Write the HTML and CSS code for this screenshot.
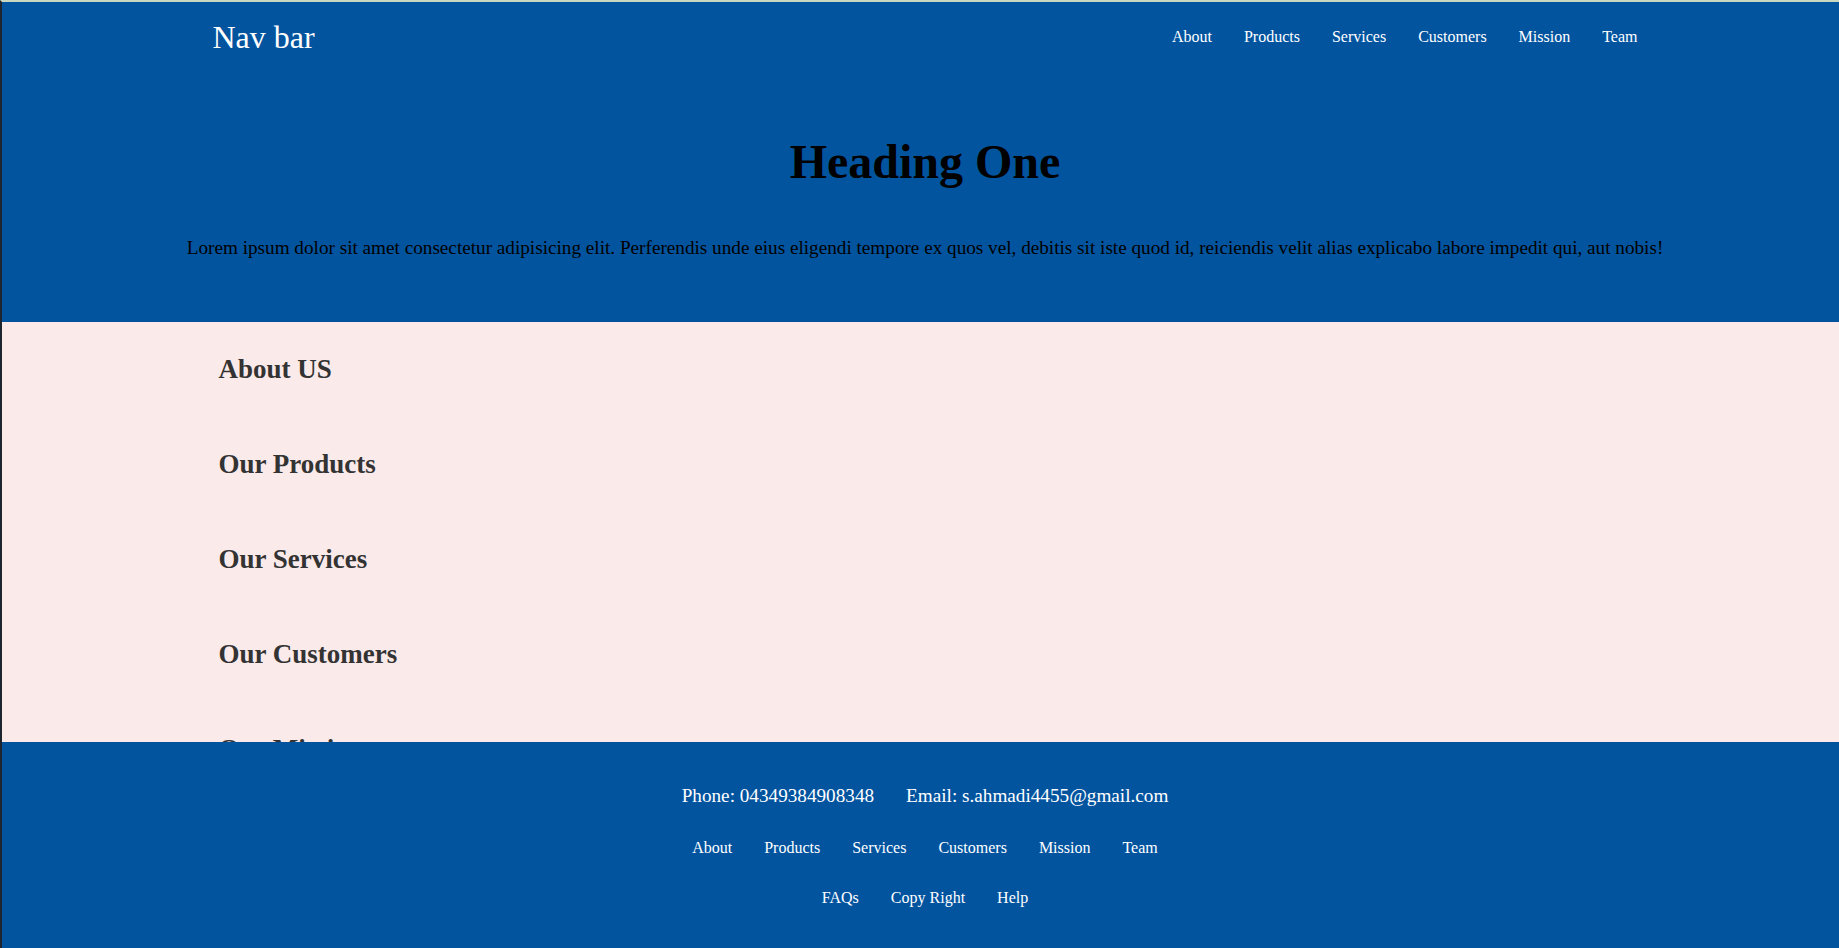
FILE: index.html
```html
<!DOCTYPE html>
<html lang="en">
<head>
<meta charset="utf-8">
<title>Nav bar</title>
<link rel="stylesheet" href="styles.css">
</head>
<body>
  <header class="hero">
    <nav class="nav">
      <div class="brand">Nav bar</div>
      <ul class="nav-links">
        <li><a href="#">About</a></li>
        <li><a href="#">Products</a></li>
        <li><a href="#">Services</a></li>
        <li><a href="#">Customers</a></li>
        <li><a href="#">Mission</a></li>
        <li><a href="#">Team</a></li>
      </ul>
    </nav>
    <div class="hero-body">
      <h1 class="hero-title">Heading One</h1>
      <p class="hero-text">Lorem ipsum dolor sit amet consectetur adipisicing elit. Perferendis unde eius eligendi tempore ex quos vel, debitis sit iste quod id, reiciendis velit alias explicabo labore impedit qui, aut nobis!</p>
    </div>
  </header>
  <main class="content">
    <div class="content-inner">
      <h2 class="section-title">About US</h2>
      <h2 class="section-title">Our Products</h2>
      <h2 class="section-title">Our Services</h2>
      <h2 class="section-title">Our Customers</h2>
      <h2 class="section-title">Our Mission</h2>
      <h2 class="section-title">Our Team</h2>
    </div>
  </main>
  <footer class="footer">
    <div class="contact">
      <span>Phone: 04349384908348</span>
      <span>Email: s.ahmadi4455@gmail.com</span>
    </div>
    <ul class="footer-links">
      <li><a href="#">About</a></li>
      <li><a href="#">Products</a></li>
      <li><a href="#">Services</a></li>
      <li><a href="#">Customers</a></li>
      <li><a href="#">Mission</a></li>
      <li><a href="#">Team</a></li>
    </ul>
    <ul class="footer-links">
      <li><a href="#">FAQs</a></li>
      <li><a href="#">Copy Right</a></li>
      <li><a href="#">Help</a></li>
    </ul>
  </footer>
</body>
</html>
```
FILE: styles.css
```css
* {
  box-sizing: border-box;
}

html {
  background: #1d2531;
}

body {
  margin: 0;
  height: 100vh;
  border-top: 2px solid #c8d8c0;
  border-left: 2px solid #1d2531;
  display: grid;
  grid-template-rows: auto 1fr auto;
  font-family: "Liberation Serif", "Times New Roman", serif;
  font-size: 19.2px;
  color: #000;
  overflow: hidden;
}

a {
  color: inherit;
  text-decoration: none;
}

ul {
  list-style: none;
  margin: 0;
  padding: 0;
}

/* ---------- header / hero ---------- */
.hero {
  background: #02549f;
  padding-left: 9px;
}

.nav {
  width: 1425px;
  height: 70px;
  margin: 0 auto;
  display: flex;
  align-items: center;
  justify-content: space-between;
}

.brand {
  font-size: 32px;
  color: #fff;
}

.nav-links {
  display: flex;
  gap: 32px;
  font-size: 16px;
  color: #fff;
}

.hero-body {
  padding: 62px 0 63px;
  text-align: center;
}

.hero-title {
  margin: 0 0 48px;
  font-size: 48px;
  font-weight: bold;
  line-height: normal;
}

.hero-text {
  margin: 0;
  font-size: 19.2px;
}

/* ---------- main content ---------- */
.content {
  background: #fbeaea;
  overflow: hidden;
  padding-left: 9px;
}

.content-inner {
  width: 1425px;
  margin: 0 auto;
  padding: 32px 0 0 6px;
  display: flex;
  flex-direction: column;
  gap: 64px;
}

.section-title {
  margin: 0;
  font-size: 27px;
  font-weight: bold;
  color: #333;
  line-height: normal;
}

/* ---------- footer ---------- */
.footer {
  background: #02549f;
  color: #fff;
  height: 206px;
  padding: 43px 0 0 9px;
  display: flex;
  flex-direction: column;
  align-items: center;
  gap: 32px;
}

.contact {
  display: flex;
  gap: 32px;
  font-size: 19.2px;
}

.footer-links {
  display: flex;
  gap: 32px;
  font-size: 16px;
}
```
